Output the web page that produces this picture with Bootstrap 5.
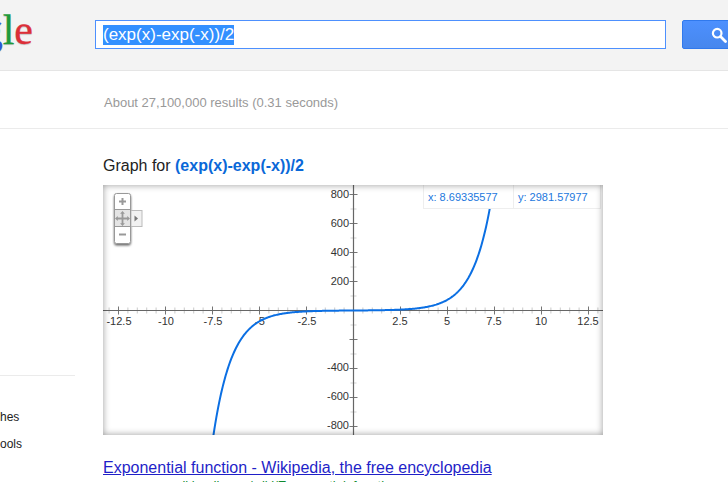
<!DOCTYPE html>
<html lang="en">
<head>
<meta charset="utf-8">
<title>(exp(x)-exp(-x))/2</title>
<link href="https://cdn.jsdelivr.net/npm/bootstrap@5.3.0/dist/css/bootstrap.min.css" rel="stylesheet">
<style>
html,body{height:482px;overflow:hidden;background:#fff;font-family:"Liberation Sans",Arial,sans-serif;}
.top-bar{height:71px;background:#f3f3f3;border-bottom:1px solid #e5e5e5;padding-top:20px;overflow:hidden;}
.logo-clip{width:33px;height:50px;margin-top:-8px;margin-right:62px;overflow:hidden;flex:none;position:relative;}
.logo-word{position:absolute;right:0;top:-10px;font:400 42px/56px "Liberation Serif",serif;white-space:nowrap;-webkit-text-stroke:.3px currentColor;text-shadow:0 1px 1px rgba(0,0,0,.2);}
.lg-b{color:#2a56d6}.lg-g{color:#1d9a3b}.lg-r{color:#dc2f38}
.query-box{width:571px;height:29px;flex:none;border:1px solid #4d90fe;border-radius:0;background:#fff;padding:4px 7px;font-size:17px;line-height:20px;white-space:nowrap;}
.query-sel{background:#3390ff;color:#fff;display:inline-block;height:20px;}
.go-btn{width:72px;height:29px;flex:none;margin-left:16px;padding:0;border:1px solid #3079ed;border-radius:2px;background:linear-gradient(#4d90fe,#4787ed);display:flex;align-items:center;}
.go-btn svg{margin-left:28px}
.stats-row{height:58px;border-bottom:1px solid #ebebeb;padding:23px 0 0 104px;font-size:13px;line-height:18px;color:#999;}
.side-col{width:75px;flex:none;padding-top:246px;font-size:12px;line-height:27px;color:#222;}
.side-rule{border-top:1px solid #ebebeb;height:29px;}
.side-item{text-align:left;font-size:12px;}
.main-col{margin-left:28px;padding-top:27px;width:520px;}
.graph-title{font-size:16px;line-height:19px;color:#222;margin:0 0 10px;font-weight:400;}
.graph-title b{color:#0a68d8;}
.plot{position:relative;width:500px;height:250px;}
.plot svg{display:block;}
.plot-vignette{position:absolute;inset:0;box-shadow:inset 0 0 7px rgba(0,0,0,.4);pointer-events:none;}
.readout{position:absolute;top:0;height:24px;background:#fff;border:1px solid #eee;border-top:0;color:#2277dd;font-size:11px;line-height:24px;padding-left:4px;}
.readout-x{left:320px;width:91px;}
.readout-y{left:410px;width:88px;}
.result-link{display:block;margin-top:23px;font-size:16px;line-height:19px;color:#1f1fc8;text-decoration:underline;}
.result-url{display:block;margin-top:-1px;margin-left:52px;font-size:13px;line-height:19px;color:#0e8a2e;white-space:nowrap;}
.tick-label{font:11px "Liberation Sans",Arial,sans-serif;fill:#333;}
</style>
</head>
<body>
<header class="top-bar d-flex align-items-start">
  <div class="logo-clip"><span class="logo-word"><span class="lg-b">g</span><span class="lg-g">l</span><span class="lg-r">e</span></span></div>
  <div class="query-box"><span class="query-sel">(exp(x)-exp(-x))/2</span></div>
  <button class="btn go-btn" type="button" aria-label="Search">
    <svg width="16" height="16" viewBox="0 0 16 16"><circle cx="6.2" cy="6.2" r="4.3" fill="none" stroke="#fff" stroke-width="2.2"/><path d="M9.5 9.5L14.5 14.5" stroke="#fff" stroke-width="2.8" stroke-linecap="round"/></svg>
  </button>
</header>
<div class="stats-row">About 27,100,000 results (0.31 seconds)</div>
<div class="d-flex">
  <aside class="side-col">
    <div class="side-rule"></div>
    <div class="side-item">hes</div>
    <div class="side-item">ools</div>
  </aside>
  <main class="main-col">
    <h2 class="graph-title">Graph for <b>(exp(x)-exp(-x))/2</b></h2>
    <div class="plot">
      <svg id="plotSvg" width="500" height="250" viewBox="103 185 500 250" xmlns="http://www.w3.org/2000/svg">
        <defs><filter id="zshadow" x="-30%" y="-30%" width="160%" height="160%"><feDropShadow dx="0" dy="1.500" stdDeviation="1.200" flood-color="#000" flood-opacity=".6"/></filter></defs>
        <rect x="103" y="185" width="500" height="250" fill="#fff"/>
        <g id="ticks" stroke="#666" stroke-width="1"></g>
        <path d="M103 310.5H603M353.5 185V435" stroke="#666" stroke-width="1.2" fill="none"/>
        <g class="tick-label" text-anchor="middle">
          <text x="119" y="325">-12.5</text><text x="166" y="325">-10</text><text x="213" y="325">-7.5</text><text x="260" y="325">-5</text><text x="307" y="325">-2.5</text>
          <text x="400" y="325">2.5</text><text x="447" y="325">5</text><text x="494" y="325">7.5</text><text x="541" y="325">10</text><text x="588" y="325">12.5</text>
        </g>
        <g class="tick-label" text-anchor="end">
          <text x="349" y="198">800</text><text x="349" y="227">600</text><text x="349" y="256">400</text><text x="349" y="285">200</text>
          <text x="349" y="371">-400</text><text x="349" y="400">-600</text><text x="349" y="429">-800</text>
        </g>
        <path id="curve" d="" fill="none" stroke="#0b6fe3" stroke-width="2"/>
        <g>
          <rect x="114.500" y="193.500" width="16" height="50" rx="2" fill="#fff" stroke="#999" filter="url(#zshadow)"/>
          <rect x="131" y="210.500" width="11" height="16" fill="#f1f1f1" stroke="#bbb"/>
          <path d="M134.500 215.500l3.500 3-3.500 3z" fill="#777"/>
          <rect x="114.500" y="209.500" width="16" height="17" fill="#e4e4e4" stroke="#999"/>
          <path d="M119 201.500h7M122.500 198v7M119 234.500h7" stroke="#999" stroke-width="2" fill="none"/>
          <path d="M122.500 211l2.400 2.800h-1.500v3.800h3.800v-1.500l2.800 2.400-2.800 2.400v-1.500h-3.800v3.800h1.500l-2.400 2.800-2.400-2.800h1.500v-3.800h-3.800v1.500l-2.800-2.400 2.800-2.400v1.500h3.800v-3.800h-1.500z" fill="#999"/>
        </g>
      </svg>
      <div class="readout readout-x">x: 8.69335577</div>
      <div class="readout readout-y">y: 2981.57977</div>
      <div class="plot-vignette"></div>
    </div>
    <a class="result-link" href="#">Exponential function - Wikipedia, the free encyclopedia</a>
    <span class="result-url">en.wikipedia.org/wiki/Exponential_function</span>
  </main>
</div>
<script src="https://cdn.jsdelivr.net/npm/bootstrap@5.3.0/dist/js/bootstrap.bundle.min.js"></script>
<script>
(function(){
  var X0=353.5,Y0=310.5,SX=18.8,SY=0.145;
  function seg(a,b,c,d,o){return '<line x1="'+a+'" y1="'+b+'" x2="'+c+'" y2="'+d+'" stroke-opacity="'+o+'"/>';}
  var t='',i,p;
  for(i=-26;i<=26;i++){ if(!i)continue; p=X0+i*9.4; t+= i%5===0?seg(p,Y0-4,p,Y0+4,.9):seg(p,Y0-3,p,Y0+3,.35); }
  for(i=-8;i<=8;i++){ if(!i)continue; p=Y0-i*14.5; t+= i%2===0?seg(X0-4,p,X0+4,p,.9):seg(X0-3,p,X0+3,p,.3); }
  document.getElementById('ticks').innerHTML=t;
  var d='';
  for(var x=-7.7;x<=7.7;x+=0.05){
    var y=(Math.exp(x)-Math.exp(-x))/2;
    d+=(d?'L':'M')+(X0+x*SX).toFixed(2)+' '+(Y0-y*SY).toFixed(2);
  }
  document.getElementById('curve').setAttribute('d',d);
})();
</script>
</body>
</html>
